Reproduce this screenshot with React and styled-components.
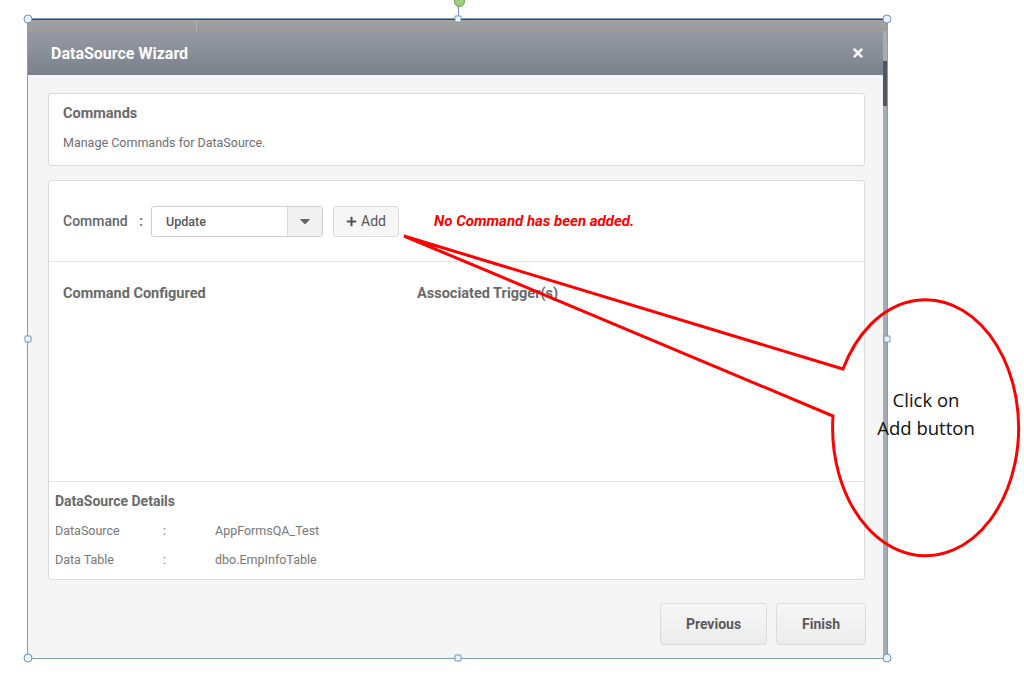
import React from 'react';
import styled, { createGlobalStyle } from 'styled-components';
import { FaTimes, FaPlus, FaCaretDown } from 'react-icons/fa';

const GlobalStyle = createGlobalStyle`
  * { box-sizing: border-box; }
  html, body { margin: 0; padding: 0; background: #fff; }
  body { font-family: Roboto, "Liberation Sans", Arial, sans-serif; }
`;

const StyledPage = styled.div`
  position: relative;
  width: 1024px;
  height: 677px;
  padding: 18px 0 0 27px;
  overflow: hidden;
  background: #fff;
`;

const StyledFrame = styled.div`
  position: relative;
  width: 861px;
  height: 641px;
  border: 1px solid #7f9dbd;
  display: flex;
  flex-direction: column;
`;

const StyledTopStrip = styled.div`
  height: 12px;
  flex: none;
  background: linear-gradient(#a3a3a3, #9a9a9a);
  border-top: 1px solid #3b4654;
  display: grid;
  grid-template-columns: 169px 1fr;
  & > span {
    border-right: 1px solid #b4b4b4;
  }
`;

const StyledInner = styled.div`
  flex: 1;
  display: flex;
`;

const StyledModal = styled.div`
  flex: 1;
  display: flex;
  flex-direction: column;
`;

const StyledEdge = styled.div`
  width: 4px;
  background: linear-gradient(
    #a4adb6 0,
    #a4adb6 30px,
    #4f5660 30px,
    #4f5660 75px,
    #a4adb6 75px
  );
`;

const StyledHeader = styled.div`
  height: 44px;
  flex: none;
  display: flex;
  align-items: center;
  justify-content: space-between;
  padding: 0 18px 0 23px;
  background: linear-gradient(#959aa4, #7b818b);
  color: #fff;
  font-size: 16px;
  font-weight: 700;
`;

const StyledBody = styled.div`
  flex: 1;
  display: flex;
  flex-direction: column;
  padding: 18px 18px 0 20px;
  background: #f5f5f5;
`;

const StyledCard = styled.div`
  background: #fff;
  border: 1px solid #dadada;
  border-radius: 3px;
  display: flex;
  flex-direction: column;
  height: ${({ h }) => h}px;
  margin-bottom: ${({ mb }) => mb || 0}px;
`;

const StyledIntro = styled.div`
  padding: 12px 14px;
  display: flex;
  flex-direction: column;
  gap: 13px;
`;

const StyledTitle = styled.div`
  font-size: ${({ size }) => size || 14.5}px;
  line-height: 16px;
  font-weight: 700;
  color: #6a6a6a;
`;

const StyledText = styled.div`
  font-size: 12.5px;
  line-height: 16px;
  color: #6f6f6f;
`;

const StyledCommandRow = styled.div`
  height: 81px;
  flex: none;
  display: flex;
  align-items: center;
  padding: 0 14px;
  border-bottom: 1px solid #e6e6e6;
`;

const StyledLabel = styled.span`
  font-size: 14px;
  font-weight: 500;
  color: #666;
  width: 88px;
  display: flex;
  justify-content: space-between;
  padding-right: 8px;
`;

const StyledSelect = styled.div`
  width: 172px;
  height: 31px;
  border: 1px solid #cdcdcd;
  border-radius: 3px;
  display: flex;
  overflow: hidden;
  & > span {
    flex: 1;
    padding-left: 14px;
    display: flex;
    align-items: center;
    font-size: 12.5px;
    font-weight: 500;
    color: #555;
  }
`;

const StyledArrow = styled.div`
  width: 35px;
  background: #f1f1f1;
  border-left: 1px solid #dadada;
  display: flex;
  align-items: center;
  justify-content: center;
  color: #666;
`;

const StyledAddButton = styled.button`
  margin-left: 10px;
  width: 66px;
  height: 31px;
  border: 1px solid #dcdcdc;
  border-radius: 3px;
  background: #f6f6f6;
  display: flex;
  align-items: center;
  justify-content: center;
  gap: 4px;
  font-family: inherit;
  font-size: 14px;
  color: #555;
  padding: 0;
`;

const StyledWarning = styled.span`
  margin-left: 35px;
  color: #f00;
  font-size: 15px;
  font-weight: 700;
  font-style: italic;
`;

const StyledColumns = styled.div`
  height: 220px;
  flex: none;
  display: grid;
  grid-template-columns: 354px 1fr;
  align-content: start;
  padding: 24px 14px 0;
  border-bottom: 1px solid #e6e6e6;
`;

const StyledDetails = styled.div`
  flex: 1;
  padding: 11px 6px;
  display: flex;
  flex-direction: column;
  gap: 13px;
`;

const StyledDetailRow = styled.div`
  display: grid;
  grid-template-columns: 108px 52px 1fr;
  font-size: 12.5px;
  line-height: 16px;
  color: #777;
  margin-top: ${({ first }) => (first ? 1 : 0)}px;
`;

const StyledFooter = styled.div`
  display: flex;
  justify-content: flex-end;
  gap: 9px;
  padding: 23px 0 0;
  margin-right: -1px;
`;

const StyledNavButton = styled.button`
  width: ${({ w }) => w}px;
  height: 42px;
  border: 1px solid #dcdcdc;
  border-radius: 3px;
  background: linear-gradient(#f6f6f6, #ececec);
  font-family: inherit;
  font-size: 14px;
  font-weight: 700;
  color: #5a5a5a;
`;

const StyledHandle = styled.span`
  position: absolute;
  left: ${({ x }) => x};
  top: ${({ y }) => y};
  width: ${({ round }) => (round ? 9 : 7)}px;
  height: ${({ round }) => (round ? 9 : 7)}px;
  transform: translate(-50%, -50%);
  border: 1px solid #6f93b8;
  border-radius: ${({ round }) => (round ? '50%' : '1px')};
  background: #e9f4fb;
`;

const StyledRotate = styled.span`
  position: absolute;
  left: 50%;
  top: -18px;
  width: 1px;
  height: 15px;
  background: #6f93b8;
  &::before {
    content: '';
    position: absolute;
    left: -4px;
    top: -5px;
    width: 9px;
    height: 9px;
    border-radius: 50%;
    background: #9bd07a;
    border: 1px solid #6a9a4c;
  }
`;

const StyledCallout = styled.svg`
  position: absolute;
  left: 0;
  top: 0;
  pointer-events: none;
`;

const StyledCalloutText = styled.div`
  position: absolute;
  left: 833px;
  top: 386px;
  width: 186px;
  text-align: center;
  font-family: "Open Sans", "Noto Sans", sans-serif;
  font-size: 18.5px;
  line-height: 28px;
  color: #111;
`;

const handles = [
  { x: '0%', y: '0%', round: true },
  { x: '50%', y: '0%' },
  { x: '100%', y: '0%', round: true },
  { x: '0%', y: '50%' },
  { x: '100%', y: '50%' },
  { x: '0%', y: '100%', round: true },
  { x: '50%', y: '100%' },
  { x: '100%', y: '100%', round: true },
];

const details = [
  ['DataSource', 'AppFormsQA_Test'],
  ['Data Table', 'dbo.EmpInfoTable'],
];

const App = () => (
  <>
    <GlobalStyle />
    <StyledPage>
      <StyledFrame>
        <StyledTopStrip>
          <span />
        </StyledTopStrip>
        <StyledInner>
          <StyledModal>
            <StyledHeader>
              <span>DataSource Wizard</span>
              <FaTimes size={14} />
            </StyledHeader>
            <StyledBody>
              <StyledCard h={73} mb={14}>
                <StyledIntro>
                  <StyledTitle>Commands</StyledTitle>
                  <StyledText>Manage Commands for DataSource.</StyledText>
                </StyledIntro>
              </StyledCard>

              <StyledCard h={400}>
                <StyledCommandRow>
                  <StyledLabel>
                    Command <span>:</span>
                  </StyledLabel>
                  <StyledSelect>
                    <span>Update</span>
                    <StyledArrow>
                      <FaCaretDown size={16} />
                    </StyledArrow>
                  </StyledSelect>
                  <StyledAddButton>
                    <FaPlus size={11} />
                    Add
                  </StyledAddButton>
                  <StyledWarning>No Command has been added.</StyledWarning>
                </StyledCommandRow>

                <StyledColumns>
                  <StyledTitle>Command Configured</StyledTitle>
                  <StyledTitle>Associated Trigger(s)</StyledTitle>
                </StyledColumns>

                <StyledDetails>
                  <StyledTitle size={14}>DataSource Details</StyledTitle>
                  {details.map(([label, value], i) => (
                    <StyledDetailRow key={label} first={i === 0}>
                      <span>{label}</span>
                      <span>:</span>
                      <span>{value}</span>
                    </StyledDetailRow>
                  ))}
                </StyledDetails>
              </StyledCard>

              <StyledFooter>
                <StyledNavButton w={107}>Previous</StyledNavButton>
                <StyledNavButton w={90}>Finish</StyledNavButton>
              </StyledFooter>
            </StyledBody>
          </StyledModal>
          <StyledEdge />
        </StyledInner>

        <StyledRotate />
        {handles.map((h) => (
          <StyledHandle key={h.x + h.y} {...h} />
        ))}
      </StyledFrame>

      <StyledCallout width="1024" height="677" viewBox="0 0 1024 677">
        <path
          d="M 843 369 L 404 236 L 833 416 A 93 128 0 1 0 843 369 Z"
          fill="none"
          stroke="#f00"
          strokeWidth="3"
          strokeLinejoin="miter"
        />
      </StyledCallout>
      <StyledCalloutText>
        Click on
        <br />
        Add button
      </StyledCalloutText>
    </StyledPage>
  </>
);

export default App;
